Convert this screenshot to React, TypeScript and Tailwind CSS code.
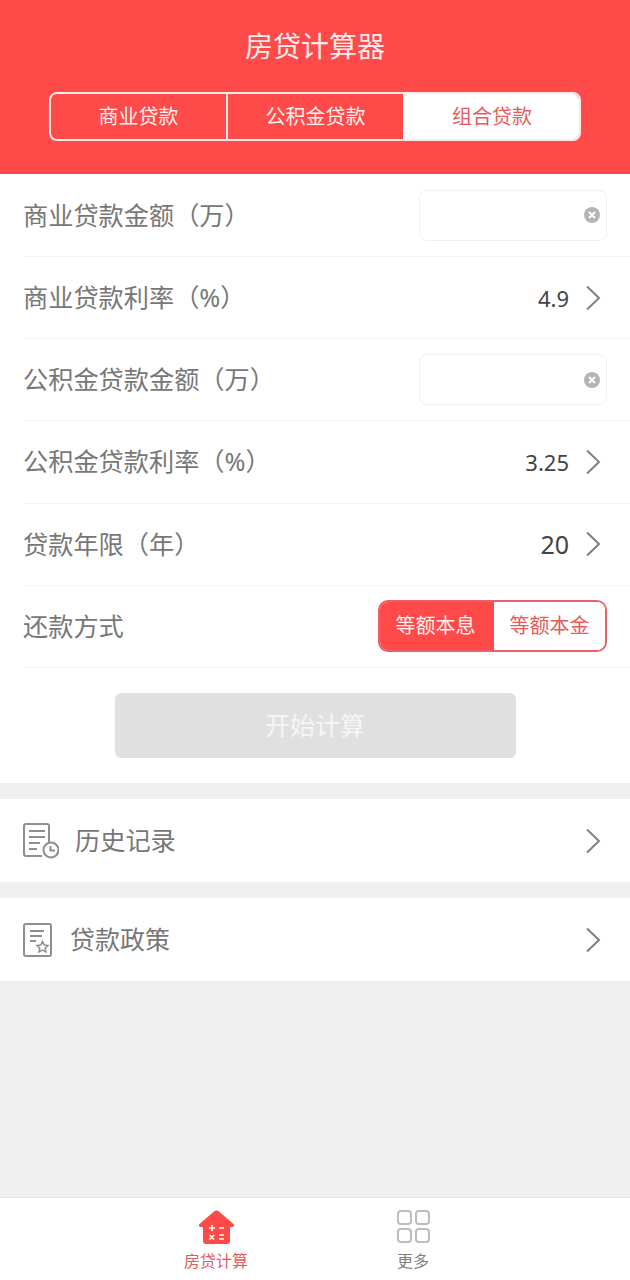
import React from "react";

const font = { fontFamily: '"Noto Sans", "Noto Sans CJK SC", sans-serif' };

function Chevron() {
  return (
    <svg width="16" height="26" viewBox="0 0 16 26" fill="none" className="shrink-0">
      <path d="M2 1.5 L14 13 L2 24.5" stroke="#808080" strokeWidth="2" />
    </svg>
  );
}

function Row({ label, children }: { label: string; children: React.ReactNode }) {
  return (
    <div className="ml-[23px] h-[82.2px] flex items-center justify-between pr-[23px] border-b border-[#f3f3f3]">
      <span className="text-[25.2px] text-[#777777] leading-none">{label}</span>
      {children}
    </div>
  );
}

function InputBox() {
  return (
    <div className="w-[188px] h-[51px] rounded-[8px] border border-[#f1f1f1] flex items-center justify-end pr-[5px]">
      <svg width="18" height="18" viewBox="0 0 18 18">
        <circle cx="9" cy="9" r="8" fill="#b4b4b4" />
        <path d="M6 6 L12 12 M12 6 L6 12" stroke="#fff" strokeWidth="2" />
      </svg>
    </div>
  );
}

function Value({ v, size }: { v: string; size: string }) {
  return (
    <div className="flex items-center gap-[16px] mr-[6px]">
      <span className={`${size} text-[#444444] leading-none`}>{v}</span>
      <Chevron />
    </div>
  );
}

export default function App() {
  return (
    <div className="w-[630px] h-[1280px] bg-[#f0f0f0] flex flex-col" style={font}>
      <header className="h-[174px] bg-[#ff4a4a] flex flex-col items-center shrink-0">
        <h1 className="mt-[26px] h-[40px] text-[28px] leading-[40px] text-white/90 font-normal">房贷计算器</h1>
        <div className="mt-[26px] w-[532px] h-[49px] flex rounded-[8px] border-2 border-[#fbe9e9] overflow-hidden text-[20px]">
          <div className="w-[177px] flex items-center justify-center text-[#fff0f0] border-r-2 border-[#fbe9e9]">商业贷款</div>
          <div className="w-[175px] flex items-center justify-center text-[#fff0f0]">公积金贷款</div>
          <div className="flex-1 bg-white flex items-center justify-center pl-[2px] text-[#e65a5a]">组合贷款</div>
        </div>
      </header>

      <section className="bg-white shrink-0 h-[609px] pt-[0.8px]">
        <Row label="商业贷款金额（万）"><InputBox /></Row>
        <Row label="商业贷款利率（%）"><Value v="4.9" size="text-[22px]" /></Row>
        <Row label="公积金贷款金额（万）"><InputBox /></Row>
        <Row label="公积金贷款利率（%）"><Value v="3.25" size="text-[22px]" /></Row>
        <Row label="贷款年限（年）"><Value v="20" size="text-[25px]" /></Row>
        <Row label="还款方式">
          <div className="w-[229px] h-[52px] flex rounded-[10px] border-2 border-[#e9606a] overflow-hidden text-[20px]">
            <div className="w-[114px] bg-[#ff4a4a] text-[#fff0f0] flex items-center justify-center pr-[3px]">等额本息</div>
            <div className="flex-1 bg-white text-[#e65a5a] flex items-center justify-center">等额本金</div>
          </div>
        </Row>
        <div className="flex justify-center pt-[25px]">
          <button className="w-[401px] h-[65px] rounded-[6px] bg-[#e0e0e0] text-[25px] text-[#f6f6f6]">开始计算</button>
        </div>
      </section>

      <section className="mt-[16px] h-[83px] bg-white flex items-center justify-between pl-[23px] pr-[29px] shrink-0">
        <div className="flex items-center gap-[16px]">
          <svg width="36" height="36" viewBox="0 0 36 36" fill="none" stroke="#8e8e8e" strokeWidth="2">
            <path d="M19 33 H3 a2 2 0 0 1 -2 -2 V3 a2 2 0 0 1 2 -2 H24 a2 2 0 0 1 2 2 V19" />
            <path d="M6 8 H22 M6 14 H22 M6 20 H17 M6 26 H14" />
            <circle cx="28" cy="27" r="7.5" />
            <path d="M27.5 23 V27.5 H32" />
          </svg>
          <span className="text-[25.2px] text-[#777777] leading-none">历史记录</span>
        </div>
        <Chevron />
      </section>

      <section className="mt-[16px] h-[83px] bg-white flex items-center justify-between pl-[23px] pr-[29px] shrink-0">
        <div className="flex items-center gap-[17px]">
          <svg width="30" height="34" viewBox="0 0 30 34" fill="none" stroke="#8e8e8e" strokeWidth="2">
            <rect x="1" y="1" width="27" height="32" rx="2" />
            <path d="M7 8 H21 M7 13 H19 M7 18 H13" />
            <path d="M19.5 18.5 L21.2 22 L25 22.5 L22.2 25 L23 28.8 L19.5 27 L16 28.8 L16.8 25 L14 22.5 L17.8 22 Z" strokeWidth="1.5" />
          </svg>
          <span className="text-[25px] text-[#777777] leading-none">贷款政策</span>
        </div>
        <Chevron />
      </section>

      <div className="flex-1" />

      <nav className="h-[83px] bg-white border-t border-[#e8e8e8] flex shrink-0 pl-[166px]">
        <div className="w-[100px] flex flex-col items-center pt-[12px]">
          <svg width="37" height="35" viewBox="0 0 37 35">
            <path d="M18.5 0.5 Q20 0.5 21 1.5 L35.5 14 Q37.5 16.5 34 17 H32 V31 Q32 34 29 34 H8 Q5 34 5 31 V17 H3 Q-0.5 16.5 1.5 14 L16 1.5 Q17 0.5 18.5 0.5 Z" fill="#ff4a4a" />
            <path d="M11 18 H17 M14 15 V21 M21 18 H26 M11.5 25 L16 29.5 M16 25 L11.5 29.5 M21 25 H26 M21 29 H26" stroke="#fff" strokeWidth="1.7" fill="none" />
          </svg>
          <span className="mt-[6px] text-[16px] leading-[20px] text-[#e65a5a]">房贷计算</span>
        </div>
        <div className="ml-[97px] w-[100px] flex flex-col items-center pt-[12px]">
          <svg width="34" height="34" viewBox="0 0 34 34" fill="none" stroke="#bdbdbd" strokeWidth="2" className="relative left-[1px]">
            <rect x="1" y="1" width="13" height="13" rx="3" />
            <rect x="19" y="1" width="13" height="13" rx="3" />
            <rect x="1" y="19" width="13" height="13" rx="3" />
            <rect x="19" y="19" width="13" height="13" rx="3" />
          </svg>
          <span className="mt-[7px] text-[16px] leading-[20px] text-[#808080]">更多</span>
        </div>
      </nav>
    </div>
  );
}
